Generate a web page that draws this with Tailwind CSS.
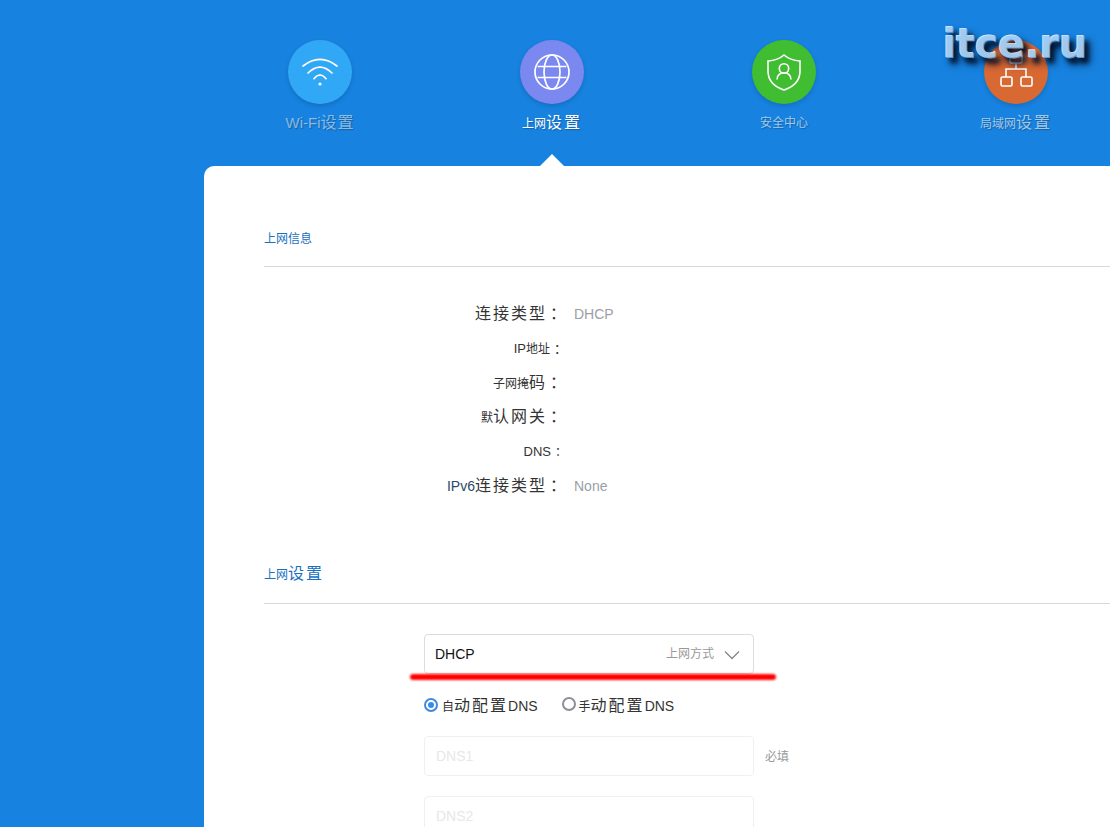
<!DOCTYPE html>
<html lang="zh">
<head>
    <meta charset="UTF-8">
    <title>上网设置</title>
    <script src="https://cdn.jsdelivr.net/npm/@tailwindcss/browser@4"></script>
</head>
<body class="bg-[#1782df]">
<div class="relative w-[1110px] h-[827px] overflow-hidden bg-[#1782df] font-['Liberation_Sans','Noto_Sans_CJK_SC',sans-serif]">

    <!-- Top nav -->
    <nav class="flex ml-[204px] w-[928px] h-[166px] pt-10">
        <a class="w-[232px] flex flex-col items-center text-white/50 [text-shadow:1px_1px_1px_rgba(0,0,0,.25)]">
            <span class="w-16 h-16 rounded-full bg-[#31a8f5] shadow-[0_2px_4px_rgba(0,0,0,.15)]">
                <svg viewBox="0 0 64 64" class="w-16 h-16" fill="none" stroke="white" stroke-width="1.7" stroke-linecap="round">
                    <path d="M15 26Q32 12.6 49 26"/>
                    <path d="M20 33Q32 21.3 44 33"/>
                    <path d="M26 38.7Q32 31.3 38 38.7"/>
                    <circle cx="32" cy="44" r="1.6" fill="white" stroke="none"/>
                </svg>
            </span>
            <span class="mt-[9px] h-5 leading-5 text-base"><span class="text-[15px]">Wi-Fi</span><span class="tracking-[1px]">设置</span></span>
        </a>
        <a class="w-[232px] flex flex-col items-center text-white [text-shadow:1px_1px_1px_rgba(0,0,0,.25)]">
            <span class="w-16 h-16 rounded-full bg-[#7b88f0] shadow-[0_2px_4px_rgba(0,0,0,.15)]">
                <svg viewBox="0 0 64 64" class="w-16 h-16" fill="none" stroke="white" stroke-width="1.7">
                    <circle cx="32" cy="32" r="17"/>
                    <ellipse cx="32" cy="32" rx="8" ry="17"/>
                    <path d="M17.5 26.5H46.5M17.5 37.5H46.5"/>
                </svg>
            </span>
            <span class="mt-[9px] h-5 leading-5 text-base"><span class="text-xs">上网</span><span class="tracking-[2px]">设置</span></span>
        </a>
        <a class="w-[232px] flex flex-col items-center text-white/60 [text-shadow:1px_1px_1px_rgba(0,0,0,.25)]">
            <span class="w-16 h-16 rounded-full bg-[#41bd31] shadow-[0_2px_4px_rgba(0,0,0,.15)]">
                <svg viewBox="0 0 64 64" class="w-16 h-16" fill="none" stroke="white" stroke-width="1.6">
                    <path d="M32 15C36 18.5 42 20.5 48 21V31C48 41 41 47 32 50C23 47 16 41 16 31V21C22 20.5 28 18.5 32 15Z"/>
                    <circle cx="32" cy="28.5" r="4.7"/>
                    <path d="M25 39.5C25 30.5 39 30.5 39 39.5"/>
                </svg>
            </span>
            <span class="mt-[9px] h-5 leading-5 text-xs">安全中心</span>
        </a>
        <a class="w-[232px] flex flex-col items-center text-white/60 [text-shadow:1px_1px_1px_rgba(0,0,0,.25)]">
            <span class="w-16 h-16 rounded-full bg-[#d96933] shadow-[0_2px_4px_rgba(0,0,0,.15)]">
                <svg viewBox="0 0 64 64" class="w-16 h-16" fill="none" stroke="white" stroke-width="1.6">
                    <rect x="26" y="14" width="12" height="9" rx="1.5"/>
                    <path d="M32 23V29M22 37V29H42V37"/>
                    <rect x="17" y="37" width="11" height="9" rx="1.5"/>
                    <rect x="37" y="37" width="11" height="9" rx="1.5"/>
                </svg>
            </span>
            <span class="mt-[9px] h-5 leading-5 text-base"><span class="text-xs">局域网</span><span class="tracking-[2px]">设置</span></span>
        </a>
    </nav>

    <!-- White panel -->
    <main class="relative ml-[204px] w-[928px] h-[700px] bg-white rounded-tl-[10px] rounded-tr-[10px] pl-[60px]">
        <!-- arrow above the active tab -->
        <span class="absolute left-[336px] -top-3 w-0 h-0 border-x-[12px] border-x-transparent border-b-[12px] border-b-white"></span>

        <section class="h-[101px] flex items-end pb-[17px] border-b border-[#d9d9d9] text-xs text-[#1a6fc0]">
            <h2 class="leading-5">上网信息</h2>
        </section>

        <dl class="mt-[30px] h-[206px] w-[370px] flex flex-col text-[#333]">
            <div class="h-[34.4px] flex items-center">
                <dt class="w-[299px] text-right text-base tracking-[2px]">连接类型<span class="inline-block translate-x-[3px] tracking-normal">：</span></dt>
                <dd class="ml-[11px] text-sm text-[#9aa0a8]">DHCP</dd>
            </div>
            <div class="h-[34.4px] flex items-center">
                <dt class="w-[299px] text-right text-[13px]">IP<span class="text-xs">地址</span><span class="inline-block translate-x-[4px]">：</span></dt>
            </div>
            <div class="h-[34.4px] flex items-center">
                <dt class="w-[299px] text-right text-xs">子网掩<span class="text-base tracking-[2px]">码</span><span class="inline-block translate-x-[3px] text-base">：</span></dt>
            </div>
            <div class="h-[34.4px] flex items-center">
                <dt class="w-[299px] text-right text-base tracking-[2px]"><span class="text-xs tracking-normal">默</span>认网关<span class="inline-block translate-x-[3px] tracking-normal">：</span></dt>
            </div>
            <div class="h-[34.4px] flex items-center">
                <dt class="w-[299px] text-right text-[13px]">DNS<span class="inline-block translate-x-[4px] text-xs">：</span></dt>
            </div>
            <div class="h-[34.4px] flex items-center">
                <dt class="w-[299px] text-right text-base tracking-[2px]"><span class="text-sm tracking-normal text-[#2c4a6a]">IPv6</span>连接类型<span class="inline-block translate-x-[3px] tracking-normal">：</span></dt>
                <dd class="ml-[11px] text-sm text-[#9aa0a8]">None</dd>
            </div>
        </dl>

        <section class="mt-[41px] h-[60px] flex items-end pb-[19px] border-b border-[#d9d9d9] text-base text-[#1a6fc0]">
            <h2 class="leading-5"><span class="text-xs">上网</span><span class="tracking-[2px]">设置</span></h2>
        </section>

        <form class="mt-[30px] ml-[160px]">
            <div class="w-[330px] h-10 pl-[10px] pr-[11px] flex items-center border border-[#dcdcdc] rounded text-sm text-[#111]">
                <span>DHCP</span>
                <span class="ml-auto text-xs text-[#999]">上网方式</span>
                <svg viewBox="0 0 16 10" class="w-4 h-2.5 ml-[10px] mr-[2px] mt-0.5" fill="none" stroke="#8a8a8a" stroke-width="1.4"><path d="M1 1.5L8 8.5L15 1.5"/></svg>
            </div>
            <div class="mt-5 h-[22px] flex items-center text-sm text-[#333]">
                <label class="flex items-center">
                    <span class="w-[14px] h-[14px] rounded-full border-2 border-[#3d8ae6] flex items-center justify-center"><span class="w-1.5 h-1.5 rounded-full bg-[#3d8ae6]"></span></span>
                    <span class="ml-[4px] mt-px"><span class="text-xs">自</span><span class="text-base tracking-[2px]">动配置</span>DNS</span>
                </label>
                <label class="flex items-center ml-6">
                    <span class="w-[14px] h-[14px] rounded-full border-2 border-[#8e8e9a] -mt-[2px]"></span>
                    <span class="ml-[3px] mt-px"><span class="text-xs">手</span><span class="text-base tracking-[2px]">动配置</span>DNS</span>
                </label>
            </div>
            <div class="mt-5 flex items-center">
                <div class="w-[330px] h-10 px-[11px] flex items-center border border-[#f0f0f0] rounded text-sm text-[#e6e8ea]">DNS1</div>
                <span class="ml-[11px] mt-px text-xs text-[#999]">必填</span>
            </div>
            <div class="mt-5 w-[330px] h-10 px-[11px] flex items-center border border-[#f0f0f0] rounded text-sm text-[#e6e8ea]">DNS2</div>
        </form>
    </main>

    <!-- red marker drawn over the screenshot -->
    <div class="absolute left-[410px] top-[674px] w-[366px] h-[6px] rounded-full bg-[#ff0000] blur-[1px]"></div>

    <!-- watermark -->
    <div class="absolute left-[943px] top-[18px] text-[40px] leading-[52px] font-bold tracking-[-0.4px] font-['DejaVu_Sans',sans-serif] text-[#8cc4f5]/70 [text-shadow:-1px_-1px_0_rgba(255,255,255,.8),4px_5px_5px_rgba(0,15,40,.95),5px_6px_8px_rgba(0,15,40,.6)]">itce.ru</div>
</div>
</body>
</html>
